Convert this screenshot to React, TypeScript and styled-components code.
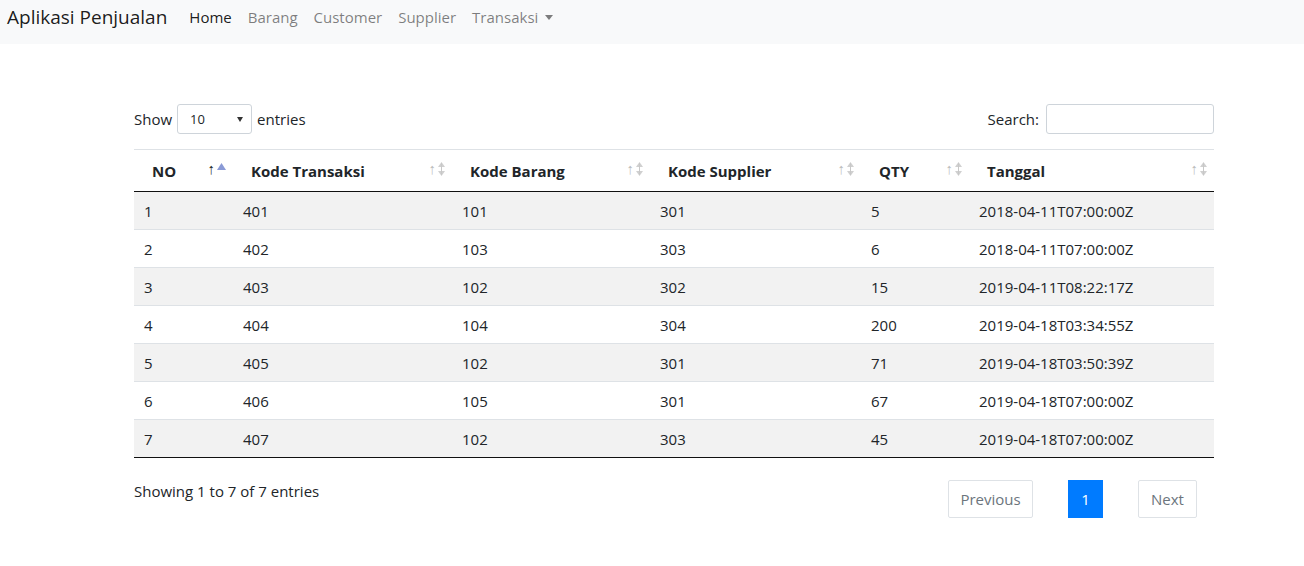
import React from "react";
import styled, { createGlobalStyle } from "styled-components";

const Global = createGlobalStyle`
  html, body { margin: 0; padding: 0; background: #fff; }
  body { font-family: "Open Sans", "Noto Sans", sans-serif; color: #212529; font-size: 15px; }
  * { box-sizing: border-box; }
`;

const Navbar = styled.nav`
  height: 44px;
  background: #f8f9fa;
  display: flex;
  align-items: center;
  padding: 0 7px;
`;
const Brand = styled.div`
  font-size: 19px;
  color: rgba(0,0,0,.9);
  margin-right: 14px;
  margin-top: -11px;
`;
const NavLink = styled.a<{ $active?: boolean }>`
  font-size: 15px;
  padding: 0 8px;
  margin-top: -11px;
  color: ${p => (p.$active ? "rgba(0,0,0,.9)" : "rgba(0,0,0,.5)")};
  text-decoration: none;
  display: flex;
  align-items: center;
`;
const Caret = styled.span`
  display: inline-block;
  margin-left: 7px;
  border-top: 5px solid rgba(0,0,0,.5);
  border-left: 4.5px solid transparent;
  border-right: 4.5px solid transparent;
  margin-top: 1px;
`;

const Main = styled.main`
  width: 1080px;
  margin: 60px 0 0 134px;
`;
const TopBar = styled.div`
  display: flex;
  justify-content: space-between;
  align-items: center;
  height: 30px;
  margin-bottom: 15px;
`;
const Label = styled.label`
  display: flex;
  align-items: center;
  gap: 5px;
  font-size: 15px;
`;
const SelectBox = styled.div`
  width: 75px;
  height: 30px;
  border: 1px solid #ced4da;
  border-radius: 3px;
  display: flex;
  align-items: center;
  justify-content: space-between;
  padding: 0 8px 0 12px;
  font-size: 13px;
`;
const SelArrow = styled.span`
  border-top: 5px solid #333;
  border-left: 3px solid transparent;
  border-right: 3px solid transparent;
`;
const SearchInput = styled.input`
  width: 168px;
  height: 30px;
  border: 1px solid #ced4da;
  border-radius: 3px;
  margin-left: 2px;
`;

const Table = styled.table`
  width: 1080px;
  border-collapse: collapse;
  table-layout: fixed;
  border-top: 1px solid #dee2e6;
  border-bottom: 1px solid #111;
`;
const Th = styled.th<{ $w: number }>`
  width: ${p => p.$w}px;
  height: 42px;
  text-align: left;
  font-weight: 700;
  font-size: 15px;
  padding: 0 18px;
  border-bottom: 1px solid #111;
  position: relative;
  vertical-align: middle;
`;
const SortIcons = styled.span`
  position: absolute;
  right: 6px;
  top: 11px;
  display: flex;
  align-items: flex-start;
`;
const UpArrow = styled.span<{ $on?: boolean }>`
  font-weight: 400;
  font-size: 15px;
  line-height: 15px;
  color: ${p => (p.$on ? "#222" : "#bbb")};
  margin-right: 1px;
`;
const Tr = styled.tr<{ $odd: boolean }>`
  background: ${p => (p.$odd ? "#f2f2f2" : "#fff")};
`;
const Td = styled.td`
  height: 38px;
  padding: 1px 10px 0;
  border-top: 1px solid #dee2e6;
  font-size: 15px;
  color: #212529;
`;
const Bottom = styled.div`
  display: flex;
  justify-content: space-between;
  align-items: flex-start;
  padding-top: 22px;
`;
const Info = styled.div`
  font-size: 15px;
  line-height: 22px;
`;
const Pager = styled.div`
  display: flex;
  gap: 35px;
  margin-right: 17px;
`;
const PageBtn = styled.button<{ $active?: boolean; $w: number }>`
  width: ${p => p.$w}px;
  height: 38px;
  border: 1px solid ${p => (p.$active ? "#007bff" : "#dee2e6")};
  background: ${p => (p.$active ? "#007bff" : "#fff")};
  color: ${p => (p.$active ? "#fff" : "#6c757d")};
  font-family: inherit;
  font-size: 15px;
  border-radius: ${p => (p.$active ? "0" : "2px")};
  padding: 0;
`;

const BothIcon = () => (
  <svg width="9" height="16" viewBox="0 0 9 16">
    <path d="M4.5 1 L8 6 L1 6 Z" fill="#d0d0d0" />
    <path d="M4.5 15 L8 10 L1 10 Z" fill="#d0d0d0" />
    <path d="M4.5 2 V14" stroke="#c8c8c8" strokeWidth="1" />
  </svg>
);
const AscIcon = () => (
  <svg width="11" height="16" viewBox="0 0 11 16">
    <path d="M5.5 2 L10 9 L1 9 Z" fill="#8a9ad6" />
  </svg>
);

const cols = [
  { t: "NO", w: 99 },
  { t: "Kode Transaksi", w: 219 },
  { t: "Kode Barang", w: 198 },
  { t: "Kode Supplier", w: 211 },
  { t: "QTY", w: 108 },
  { t: "Tanggal", w: 245 },
];

const rows = [
  ["1", "401", "101", "301", "5", "2018-04-11T07:00:00Z"],
  ["2", "402", "103", "303", "6", "2018-04-11T07:00:00Z"],
  ["3", "403", "102", "302", "15", "2019-04-11T08:22:17Z"],
  ["4", "404", "104", "304", "200", "2019-04-18T03:34:55Z"],
  ["5", "405", "102", "301", "71", "2019-04-18T03:50:39Z"],
  ["6", "406", "105", "301", "67", "2019-04-18T07:00:00Z"],
  ["7", "407", "102", "303", "45", "2019-04-18T07:00:00Z"],
];

export default function App() {
  return (
    <>
      <Global />
      <Navbar>
        <Brand>Aplikasi Penjualan</Brand>
        <NavLink $active>Home</NavLink>
        <NavLink>Barang</NavLink>
        <NavLink>Customer</NavLink>
        <NavLink>Supplier</NavLink>
        <NavLink>Transaksi<Caret /></NavLink>
      </Navbar>
      <Main>
        <TopBar>
          <Label>
            Show
            <SelectBox>
              10
              <SelArrow />
            </SelectBox>
            entries
          </Label>
          <Label>
            Search:
            <SearchInput />
          </Label>
        </TopBar>
        <Table>
          <thead>
            <tr>
              {cols.map((c, i) => (
                <Th key={c.t} $w={c.w}>
                  {c.t}
                  <SortIcons>
                    <UpArrow $on={i === 0}>↑</UpArrow>
                    {i === 0 ? <AscIcon /> : <BothIcon />}
                  </SortIcons>
                </Th>
              ))}
            </tr>
          </thead>
          <tbody>
            {rows.map((r, i) => (
              <Tr key={i} $odd={i % 2 === 0}>
                {r.map((v, j) => (
                  <Td key={j}>{v}</Td>
                ))}
              </Tr>
            ))}
          </tbody>
        </Table>
        <Bottom>
          <Info>Showing 1 to 7 of 7 entries</Info>
          <Pager>
            <PageBtn $w={85}>Previous</PageBtn>
            <PageBtn $w={35} $active>1</PageBtn>
            <PageBtn $w={59}>Next</PageBtn>
          </Pager>
        </Bottom>
      </Main>
    </>
  );
}
